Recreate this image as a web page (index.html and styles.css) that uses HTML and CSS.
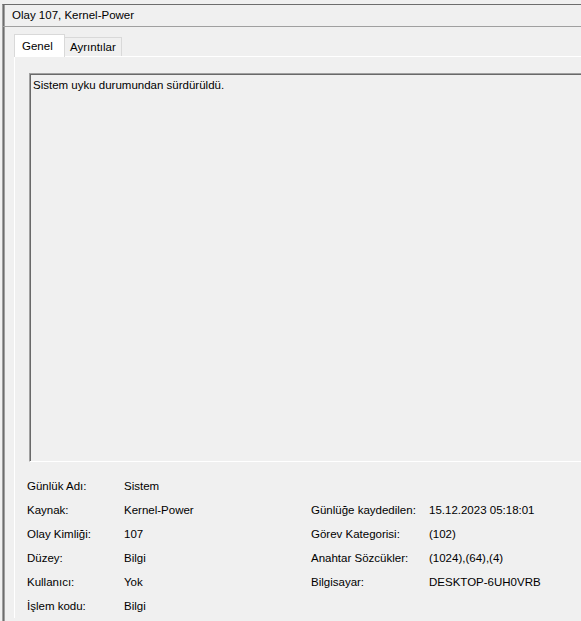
FILE: index.html
```html
<!DOCTYPE html>
<html lang="tr">
<head>
<meta charset="utf-8">
<title>Olay 107, Kernel-Power</title>
<link rel="stylesheet" href="styles.css">
</head>
<body>
<div class="window">
  <div class="title">Olay 107, Kernel-Power</div>
  <div class="tabstrip">
    <div class="tab active">Genel</div>
    <div class="tab">Ayrıntılar</div>
  </div>
  <div class="panel">
    <div class="textbox">Sistem uyku durumundan sürdürüldü.</div>
    <div class="details">
      <div class="lbl">Günlük Adı:</div><div class="val">Sistem</div><div class="lbl"></div><div class="val"></div>
      <div class="lbl">Kaynak:</div><div class="val">Kernel-Power</div><div class="lbl">Günlüğe kaydedilen:</div><div class="val">15.12.2023 05:18:01</div>
      <div class="lbl">Olay Kimliği:</div><div class="val">107</div><div class="lbl">Görev Kategorisi:</div><div class="val">(102)</div>
      <div class="lbl">Düzey:</div><div class="val">Bilgi</div><div class="lbl">Anahtar Sözcükler:</div><div class="val">(1024),(64),(4)</div>
      <div class="lbl">Kullanıcı:</div><div class="val">Yok</div><div class="lbl">Bilgisayar:</div><div class="val">DESKTOP-6UH0VRB</div>
      <div class="lbl">İşlem kodu:</div><div class="val">Bilgi</div><div class="lbl"></div><div class="val"></div>
    </div>
  </div>
</div>
</body>
</html>
```

FILE: styles.css
```css
html, body {
  margin: 0;
  padding: 0;
  background: #f0f0f0;
  overflow: hidden;
  height: 621px;
}
body {
  font-family: "Liberation Sans", Arial, sans-serif;
  font-size: 11.5px;
  color: #000;
}
.window {
  margin-top: 4px;
  margin-left: 2px;
  width: 579px;
  height: 617px;
  overflow: hidden;
  border-top: 1px solid #6d6d6d;
  border-left: 1px solid #a0a0a0;
  box-shadow: inset 1px 0 #6d6d6d, inset 2px 0 #a0a0a0;
  box-sizing: border-box;
}
.title {
  height: 21px;
  line-height: 21px;
  padding-left: 9px;
  border-bottom: 1px solid #a0a0a0;
  white-space: nowrap;
}
.tabstrip {
  display: flex;
  align-items: flex-end;
  margin-left: 11px;
  height: 29px;
}
.tab {
  width: 57px;
  height: 19px;
  line-height: 19px;
  padding: 0 0 0 5px;
  border: 1px solid #d9d9d9;
  border-bottom: none;
  border-left: none;
  background: #f0f0f0;
  box-sizing: border-box;
  white-space: nowrap;
}
.tab.active {
  position: relative;
  z-index: 1;
  width: 51px;
  height: 23px;
  line-height: 22px;
  padding: 0 0 0 7px;
  border-left: 1px solid #d9d9d9;
  background: #fff;
  margin-bottom: -1px;
}
.panel {
  margin-left: 11px;
  width: 700px;
  border-top: 1px solid #fff;
  border-left: 1px solid #fff;
  padding: 16px 0 0 12px;
}
.textbox {
  margin-left: 2px;
  height: 389px;
  border: 1px solid #a0a0a0;
  border-right-color: #fff;
  border-bottom-color: #fff;
  box-shadow: inset 1px 1px #696969;
  padding: 3px 3px;
  box-sizing: border-box;
  line-height: 16px;
}
.details {
  margin-top: 12px;
  display: grid;
  grid-template-columns: 97px 187px 118px auto;
  grid-auto-rows: 24px;
  align-items: center;
  white-space: nowrap;
}
```
